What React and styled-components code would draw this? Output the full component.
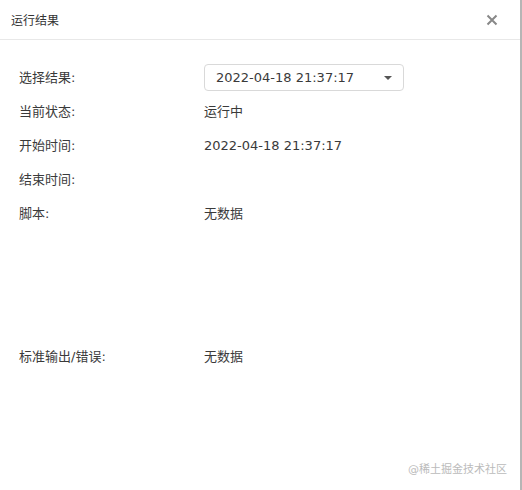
import React from "react";
import styled, { createGlobalStyle } from "styled-components";

const GlobalStyle = createGlobalStyle`
  html, body {
    margin: 0;
    padding: 0;
    background: #fff;
  }
  body {
    font-family: "DejaVu Sans", "Noto Sans CJK SC", sans-serif;
    color: #333;
  }
`;

const Dialog = styled.div`
  position: relative;
  width: 520px;
  height: 490px;
  border-right: 2px solid #b5b5b5;
  background: #fff;
`;

const Header = styled.div`
  height: 39px;
  display: flex;
  align-items: center;
  justify-content: space-between;
  padding: 0 22px 0 11px;
  border-bottom: 1px solid #e8e8e8;
`;

const Title = styled.div`
  font-size: 12px;
  color: #333;
`;

const Close = styled.button`
  border: none;
  background: none;
  padding: 0;
  width: 12px;
  height: 12px;
  display: flex;
  cursor: pointer;
`;

const Body = styled.div`
  padding: 24px 19px 0;
`;

const Row = styled.div`
  display: flex;
  align-items: flex-start;
  height: ${(p) => p.$h || 34}px;
  font-size: 13px;
`;

const Label = styled.div`
  width: 185px;
  line-height: 27px;
  color: #3a3a3a;
`;

const Value = styled.div`
  line-height: 27px;
  color: #3a3a3a;
`;

const Select = styled.div`
  box-sizing: border-box;
  width: 200px;
  height: 27px;
  border: 1px solid #d9d9d9;
  border-radius: 4px;
  display: flex;
  align-items: center;
  justify-content: space-between;
  padding: 0 11px 0 11px;
  color: #3a3a3a;
  font-size: 13px;
`;

const Caret = styled.span`
  width: 0;
  height: 0;
  border-left: 4px solid transparent;
  border-right: 4px solid transparent;
  border-top: 4px solid #555;
`;

const Watermark = styled.div`
  position: absolute;
  right: 13px;
  bottom: 14px;
  font-size: 11px;
  color: #bbb;
`;

const rows = [
  { label: "当前状态:", value: "运行中" },
  { label: "开始时间:", value: "2022-04-18 21:37:17" },
  { label: "结束时间:", value: "" },
  { label: "脚本:", value: "无数据", h: 143 },
  { label: "标准输出/错误:", value: "无数据" },
];

export default function App() {
  return (
    <>
      <GlobalStyle />
      <Dialog>
        <Header>
          <Title>运行结果</Title>
          <Close aria-label="close">
            <svg width="12" height="12" viewBox="0 0 12 12">
              <path d="M1.5 1.5 L10.5 10.5 M10.5 1.5 L1.5 10.5" stroke="#888" strokeWidth="2" />
            </svg>
          </Close>
        </Header>
        <Body>
          <Row>
            <Label>选择结果:</Label>
            <Select>
              <span>2022-04-18 21:37:17</span>
              <Caret />
            </Select>
          </Row>
          {rows.map((r) => (
            <Row key={r.label} $h={r.h}>
              <Label>{r.label}</Label>
              <Value>{r.value}</Value>
            </Row>
          ))}
        </Body>
        <Watermark>@稀土掘金技术社区</Watermark>
      </Dialog>
    </>
  );
}
